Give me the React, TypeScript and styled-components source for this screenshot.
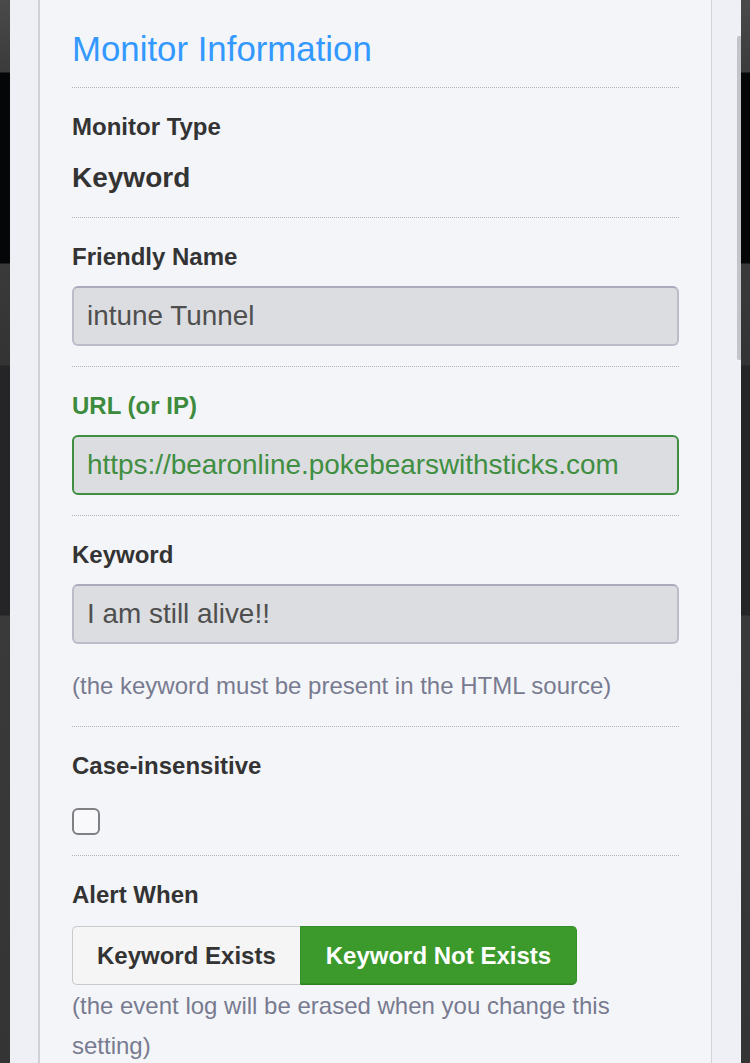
import React from "react";
import styled, { createGlobalStyle, css } from "styled-components";

const GlobalStyle = createGlobalStyle`
  html, body {
    margin: 0;
    padding: 0;
    background: #2a2a2c;
  }
  body {
    font-family: "Liberation Sans", Arial, Helvetica, sans-serif;
  }
  * { box-sizing: border-box; }
`;

const Backdrop = styled.div`
  min-height: 100vh;
  padding: 0 9px 0 10px;
  background: linear-gradient(
    to bottom,
    #4a4a4a 0px,
    #3b3b3b 72px,
    #050607 73px,
    #050607 263px,
    #3a3a3a 264px,
    #333333 365px,
    #252527 366px,
    #252527 615px,
    #3a3a3a 616px,
    #343434 100%
  );
`;

const Modal = styled.div`
  position: relative;
  min-height: 100vh;
  background: #eff0f6;
  padding: 0 29px 0 28px;
`;

const ScrollThumb = styled.div`
  position: absolute;
  top: 36px;
  right: 0;
  width: 4px;
  height: 324px;
  border-radius: 2px 0 0 2px;
  background: #c3c4ca;
`;

const Panel = styled.div`
  min-height: 100vh;
  background: #f4f5f9;
  border-left: 2px solid #cfd0d8;
  border-right: 1px solid #d3d4db;
  padding: 0 32px;
`;

const Header = styled.div`
  padding: 28px 0 18px;
  border-bottom: 1px dotted #b3b4b8;
`;

const Title = styled.h2`
  margin: 0;
  font-size: 34.8px;
  line-height: 41px;
  font-weight: 400;
  color: #3399ff;
`;

const Section = styled.div<{ $last?: boolean }>`
  padding: 23px 0 20px;
  border-bottom: 1px dotted #b3b4b8;
  ${(p) =>
    p.$last &&
    css`
      border-bottom: none;
      padding-bottom: 0;
    `}
`;

const Label = styled.div<{ $tone?: "default" | "success" }>`
  font-size: 24px;
  line-height: 32px;
  font-weight: 700;
  color: ${(p) => (p.$tone === "success" ? "#3d8b3d" : "#333333")};
  margin-bottom: 13px;
`;

const Value = styled.div`
  font-size: 28px;
  line-height: 38px;
  font-weight: 700;
  color: #333333;
  margin-top: 16px;
`;

const TextInput = styled.input<{ $tone?: "default" | "success" }>`
  display: block;
  width: 100%;
  height: 60px;
  margin: 0;
  padding: 0 13px;
  border-radius: 6px;
  background: #dcdde0;
  font-family: inherit;
  font-size: 27.9px;
  outline: none;
  ${(p) =>
    p.$tone === "success"
      ? css`
          border: 2px solid #3f8e42;
          color: #3f8e42;
        `
      : css`
          border: 2px solid #babcc9;
          border-top-color: #a9abba;
          color: #4f4f4f;
        `}
`;

const Help = styled.div<{ $tight?: boolean }>`
  font-size: 24px;
  line-height: 40px;
  color: #787b90;
  margin-top: ${(p) => (p.$tight ? "1px" : "22px")};
`;

const Checkbox = styled.input.attrs({ type: "checkbox" })`
  appearance: none;
  display: block;
  width: 28px;
  height: 27px;
  margin: 26px 0 0;
  border: 2px solid #7f7f84;
  border-radius: 6px;
  background: #f9f9fb;
`;

const ButtonGroup = styled.div`
  display: flex;
  margin-top: 15px;
`;

const ToggleButton = styled.button<{ $active?: boolean; $pos: "first" | "last" }>`
  height: 59px;
  margin: 0;
  font-family: inherit;
  font-size: 24px;
  font-weight: 700;
  cursor: pointer;
  border-radius: ${(p) => (p.$pos === "first" ? "5px 0 0 5px" : "0 5px 5px 0")};
  ${(p) =>
    p.$active
      ? css`
          padding: 0 25px;
          background: #3b9a2b;
          color: #ffffff;
          border: 1px solid #33902a;
          border-bottom-color: #2d7f22;
          box-shadow: inset 0 -1px 0 rgba(0, 0, 0, 0.08);
        `
      : css`
          padding: 0 24px;
          background: #f5f5f5;
          color: #333333;
          border: 1px solid #cacaca;
          border-right: none;
        `}
`;

export default function App() {
  return (
    <>
      <GlobalStyle />
      <Backdrop>
        <Modal>
          <ScrollThumb />
          <Panel>
            <Header>
              <Title>Monitor Information</Title>
            </Header>

            <Section>
              <Label>Monitor Type</Label>
              <Value>Keyword</Value>
            </Section>

            <Section>
              <Label>Friendly Name</Label>
              <TextInput readOnly value="intune Tunnel" />
            </Section>

            <Section>
              <Label $tone="success">URL (or IP)</Label>
              <TextInput
                $tone="success"
                readOnly
                value="https://bearonline.pokebearswithsticks.com"
              />
            </Section>

            <Section>
              <Label>Keyword</Label>
              <TextInput readOnly value="I am still alive!!" />
              <Help>(the keyword must be present in the HTML source)</Help>
            </Section>

            <Section>
              <Label>Case-insensitive</Label>
              <Checkbox readOnly />
            </Section>

            <Section $last>
              <Label>Alert When</Label>
              <ButtonGroup>
                <ToggleButton $pos="first">Keyword Exists</ToggleButton>
                <ToggleButton $pos="last" $active>
                  Keyword Not Exists
                </ToggleButton>
              </ButtonGroup>
              <Help $tight>
                (the event log will be erased when you change this setting)
              </Help>
            </Section>
          </Panel>
        </Modal>
      </Backdrop>
    </>
  );
}
